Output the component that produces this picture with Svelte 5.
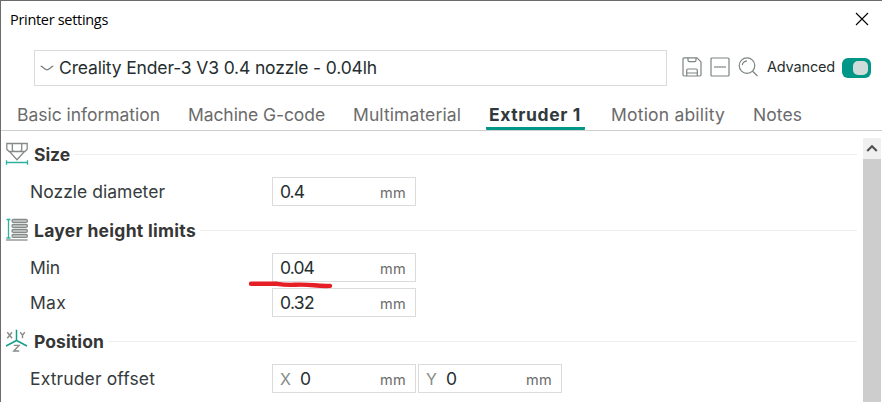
<script>
  const tabs = [
    { label: 'Basic information', w: 143 },
    { label: 'Machine G-code', w: 137 },
    { label: 'Multimaterial', w: 108 },
    { label: 'Extruder 1', w: 92, active: true },
    { label: 'Motion ability', w: 114 },
    { label: 'Notes', w: 49 }
  ];
  const sections = [
    { title: 'Size', w: 36, icon: 'size', rows: [
      { label: 'Nozzle diameter', w: 135, fields: [{ value: '0.4', vw: 24 }] }
    ] },
    { title: 'Layer height limits', w: 162, icon: 'layers', rows: [
      { label: 'Min', w: 30, fields: [{ value: '0.04', vw: 34 }] },
      { label: 'Max', w: 36, fields: [{ value: '0.32', vw: 34 }] }
    ] },
    { title: 'Position', w: 70, icon: 'axes', rows: [
      { label: 'Extruder offset', w: 125, fields: [{ axis: 'X', value: '0', vw: 10 }, { axis: 'Y', value: '0', vw: 10 }] }
    ] }
  ];

  // Spreads the letters so that a label takes up exactly `width` pixels.
  function fit(node, width) {
    const natural = node.getBoundingClientRect().width;
    node.style.letterSpacing = (width - natural) / node.textContent.length + 'px';
  }
</script>

<div class="window">
  <header class="titlebar">
    <span class="title" use:fit={98}>Printer settings</span>
    <svg width="14" height="14" viewBox="0 0 14 14" fill="none" stroke="#000" stroke-width="1.1"><path d="M1 1l12 12M13 1L1 13" /></svg>
  </header>

  <div class="toolbar">
    <div class="preset">
      <svg width="14" height="8" viewBox="0 0 14 8" fill="none" stroke="#777f7d" stroke-width="1.2"><path d="M.7 2.2C3 2.7 4.8 5.8 7 5.8S11 2.7 13.3 2.2" /></svg>
      <span use:fit={318}>Creality Ender-3 V3 0.4 nozzle - 0.04lh</span>
    </div>
    <div class="icons">
      <svg width="20" height="20" viewBox="0 0 20 20" fill="none" stroke="#7c8482" stroke-width="1.2"><path d="M2 .9H15L19 4.9V17.8Q19 19 17.8 19H2.2Q1 19 1 17.8V2Q1 .9 2 .9ZM6 1V3.3Q6 4.6 7.2 4.6H12.8Q14 4.6 14 3.3V1M4.7 19V13.2Q4.7 12 5.9 12H14.1Q15.3 12 15.3 13.2V19M5 16H15" /></svg>
      <svg width="20" height="20" viewBox="0 0 20 20" fill="none" stroke="#7c8482" stroke-width="1.2"><rect x="1" y="1" width="18" height="18" rx="1" /><path d="M4 10H16" /></svg>
      <svg width="20" height="20" viewBox="0 0 20 20" fill="none" stroke="#7c8482" stroke-width="1.2"><circle cx="9" cy="8.6" r="7.8" /><path d="M14.6 14.2L19.5 19M4.2 8.1Q4.8 4.4 9 3.8" /></svg>
    </div>
    <span class="advanced" use:fit={68}>Advanced</span>
    <div class="toggle"><i></i></div>
  </div>

  <nav>
    {#each tabs as tab}
      <div class="tab" class:active={tab.active}><span use:fit={tab.w}>{tab.label}</span></div>
    {/each}
  </nav>

  <main>
    <div class="content">
      {#each sections as section}
        <section>
          <h2>
            <svg width="24" height="24" viewBox="0 0 24 24" fill="none" stroke="#858b89" stroke-width="1.3">
              {#if section.icon === 'size'}
                <path d="M1.8 1.5H22.2V7.3L20 9.5H4L1.8 7.3ZM7.3 1.5V7.5L8.5 9.5M16.7 1.5V7.5L15.5 9.5M4.5 9.5L12 17.8L19.5 9.5" />
                <path d="M1.5 20.5H22.5M1.5 18.3V22.7M22.5 18.3V22.7" stroke="#30b0a0" />
              {:else if section.icon === 'layers'}
                <path d="M3.5 1.5V20M1.5 1.5H5.5M1.5 20H5.5" stroke="#30b0a0" />
                {#each [1.5, 6.5, 11.5, 16.5] as y}
                  <rect x="7" {y} width="15.4" height="2.8" rx="1.4" fill="#cdd1d0" />
                {/each}
                <path d="M1 22H22.5" />
              {:else}
                <path d="M2.3 3.2L7 9.2M7 3.2L2.3 9.2M15.2 3.2L17.5 6.2L19.8 3.2M17.5 6.2V9.2M8.8 16.4H14L8.8 22H14.2" stroke-width="1.4" />
                <path d="M11.5 .8V11.5M11.5 11.5L1 17M11.5 11.5L22 17" stroke="#159e8e" stroke-width="1.5" />
              {/if}
            </svg>
            <span use:fit={section.w}>{section.title}</span>
            <i class="rule"></i>
          </h2>
          {#each section.rows as row}
            <div class="row">
              <div class="label"><span use:fit={row.w}>{row.label}</span></div>
              {#each row.fields as field}
                <div class="field">
                  {#if field.axis}<span class="axis">{field.axis}</span>{/if}
                  <span class="value" use:fit={field.vw}>{field.value}</span>
                  <span class="unit" use:fit={26}>mm</span>
                </div>
              {/each}
            </div>
          {/each}
        </section>
      {/each}
      <svg class="mark" width="86" height="12" viewBox="0 0 86 12" fill="none" stroke="#e61e25" stroke-width="4.4" stroke-linecap="round" stroke-linejoin="round"><path d="M3 4.8Q16 4.6 29 4.8Q38 6.2 47 5.7Q57 5.3 66 6.2Q74 7.2 82 6.9" /></svg>
    </div>
    <div class="scrollbar">
      <div class="up"><svg width="12" height="9" viewBox="0 0 12 9" fill="none" stroke="#505050" stroke-width="2.1"><path d="M1.2 7L6 2.2L10.8 7" /></svg></div>
      <div class="thumb"></div>
    </div>
  </main>
</div>

<style>
  :global(body) { overflow: hidden; background: #fff; }
  .window {
    box-sizing: border-box; width: 882px; height: 402px; overflow: hidden;
    display: flex; flex-direction: column;
    border-top: 1px solid #6b6b6b; border-left: 1px solid #6b6b6b;
    background: #fff; color: #363b3e;
    font: 17.5px/24px Inter, "Open Sans", sans-serif; white-space: nowrap;
  }
  svg { display: block; flex: none; }
  span { flex: none; }
  .titlebar { height: 49px; flex: none; display: flex; justify-content: space-between; align-items: flex-start; padding: 0 13px 0 9px; }
  .title { font: 14.5px/22px "Open Sans", sans-serif; color: #000; margin-top: 8px; }
  .titlebar svg { margin-top: 11px; }
  .toolbar { height: 36px; flex: none; display: flex; align-items: center; padding-left: 33px; }
  .preset { box-sizing: border-box; width: 633px; height: 36px; border: 1px solid #dbdbdb; display: flex; align-items: center; gap: 5px; padding-left: 5px; color: #262e30; }
  .icons { display: flex; gap: 8px; margin: -3px 0 0 15px; }
  .advanced { font-size: 14.5px; color: #262e30; margin: -2px 0 0 9px; }
  .toggle { box-sizing: border-box; width: 29px; height: 20px; border-radius: 6px; background: #009688; margin: 0 0 0 7px; padding: 3px; display: flex; justify-content: flex-end; }
  .toggle i { width: 15px; height: 14px; border-radius: 5px; background: #d0dcda; }
  nav { height: 44px; flex: none; display: flex; gap: 22px; padding-left: 13px; border-bottom: 1px solid #cecece; align-items: flex-end; }
  .tab { height: 24px; padding: 0 3px; border-bottom: 3px solid transparent; color: #6b6b6b; display: flex; }
  .tab.active { font-weight: 700; color: #303a3c; border-color: #009688; border-radius: 1px; padding-right: 4px; margin-right: 1px; }
  main { flex: 1; min-height: 0; display: flex; }
  .content { width: 856px; flex: none; padding-top: 2px; position: relative; }
  h2 { height: 41px; margin: 0; padding-left: 4px; display: flex; align-items: center; font-size: 17.5px; font-weight: 700; color: #363636; }
  h2 span { margin: 3px 0 0 5px; }
  .rule { flex: 1; height: 1px; background: #eee; margin: 1px 0 0 4px; }
  .row { height: 35px; display: flex; align-items: center; padding-left: 29px; gap: 2px; }
  .label { width: 240px; display: flex; }
  .field { box-sizing: border-box; width: 144px; height: 29px; border: 1px solid #dbdbdb; display: flex; align-items: center; padding: 0 9px 0 7px; color: #262e30; }
  .axis { width: 20px; font-size: 16px; color: #858b89; }
  .unit { margin: 2px 0 0 auto; font-size: 14.5px; color: #6b6b6b; }
  .mark { position: absolute; left: 247px; top: 148px; }
  .scrollbar { width: 18px; margin: 7px 1px 0 6px; display: flex; flex-direction: column; background: #f0f0f0; }
  .up { height: 21px; display: flex; align-items: center; justify-content: center; }
  .thumb { flex: 1; background: #cdcdcd; }
</style>
